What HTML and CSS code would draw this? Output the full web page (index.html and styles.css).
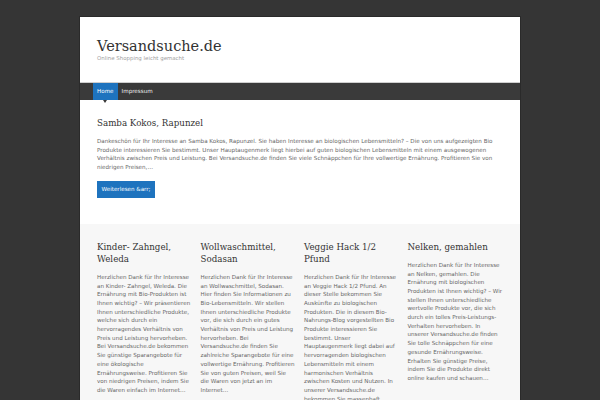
FILE: index.html
```html
<!DOCTYPE html>
<html lang="de">
<head>
<meta charset="utf-8">
<title>Versandsuche.de</title>
<link rel="stylesheet" href="styles.css">
</head>
<body>
<div class="site">
  <header class="masthead">
    <h1 class="site-title">Versandsuche.de</h1>
    <p class="tagline">Online Shopping leicht gemacht</p>
  </header>
  <nav class="mainnav">
    <a class="navitem current" href="#">Home</a>
    <a class="navitem" href="#">Impressum</a>
  </nav>
  <main class="featured">
    <h2 class="post-title">Samba Kokos, Rapunzel</h2>
    <p class="excerpt">Dankeschön für Ihr Interesse an Samba Kokos, Rapunzel. Sie haben Interesse an biologischen Lebensmitteln? – Die von uns aufgezeigten Bio Produkte interessieren Sie bestimmt. Unser Hauptaugenmerk liegt hierbei auf guten biologischen Lebensmitteln mit einem ausgewogenen Verhältnis zwischen Preis und Leistung. Bei Versandsuche.de finden Sie viele Schnäppchen für Ihre vollwertige Ernährung. Profitieren Sie von niedrigen Preisen,…</p>
    <a class="more" href="#">Weiterlesen &amp;arr;</a>
  </main>
  <section class="grid">
    <article class="card">
      <h3 class="card-title">Kinder- Zahngel, Weleda</h3>
      <p class="card-text">Herzlichen Dank für Ihr Interesse an Kinder- Zahngel, Weleda. Die Ernährung mit Bio-Produkten ist Ihnen wichtig? – Wir präsentieren Ihnen unterschiedliche Produkte, welche sich durch ein hervorragendes Verhältnis von Preis und Leistung hervorheben. Bei Versandsuche.de bekommen Sie günstige Sparangebote für eine ökologische Ernährungsweise. Profitieren Sie von niedrigen Preisen, indem Sie die Waren einfach im Internet…</p>
    </article>
    <article class="card">
      <h3 class="card-title">Wollwaschmittel, Sodasan</h3>
      <p class="card-text">Herzlichen Dank für Ihr Interesse an Wollwaschmittel, Sodasan. Hier finden Sie Informationen zu Bio-Lebensmitteln. Wir stellen Ihnen unterschiedliche Produkte vor, die sich durch ein gutes Verhältnis von Preis und Leistung hervorheben. Bei Versandsuche.de finden Sie zahlreiche Sparangebote für eine vollwertige Ernährung. Profitieren Sie von guten Preisen, weil Sie die Waren von jetzt an im Internet…</p>
    </article>
    <article class="card">
      <h3 class="card-title">Veggie Hack 1/2 Pfund</h3>
      <p class="card-text">Herzlichen Dank für Ihr Interesse an Veggie Hack 1/2 Pfund. An dieser Stelle bekommen Sie Auskünfte zu biologischen Produkten. Die in diesem Bio-Nahrungs-Blog vorgestellten Bio Produkte interessieren Sie bestimmt. Unser Hauptaugenmerk liegt dabei auf hervorragenden biologischen Lebensmitteln mit einem harmonischen Verhältnis zwischen Kosten und Nutzen. In unserer Versandsuche.de bekommen Sie massenhaft Schnäppchen…</p>
    </article>
    <article class="card">
      <h3 class="card-title">Nelken, gemahlen</h3>
      <p class="card-text">Herzlichen Dank für Ihr Interesse an Nelken, gemahlen. Die Ernährung mit biologischen Produkten ist Ihnen wichtig? – Wir stellen Ihnen unterschiedliche wertvolle Produkte vor, die sich durch ein tolles Preis-Leistungs-Verhalten hervorheben. In unserer Versandsuche.de finden Sie tolle Schnäppchen für eine gesunde Ernährungsweise. Erhalten Sie günstige Preise, indem Sie die Produkte direkt online kaufen und schauen…</p>
    </article>
  </section>
</div>
</body>
</html>
```
FILE: styles.css
```css
html, body {
  margin: 0;
  padding: 0;
  background: #353535;
  height: 100%;
  overflow: hidden;
}
body {
  font-family: "DejaVu Sans", "Open Sans", sans-serif;
  color: #666;
}
.site {
  width: 440px;
  margin: 17px 0 0 80px;
  background: #fff;
  box-shadow: 0 0 0 1px #2a2a2a;
  min-height: 400px;
}
.masthead {
  height: 66px;
  box-sizing: border-box;
  padding: 20px 17px 0;
  border-bottom: 1px solid #cfcfcf;
}
.site-title {
  margin: 0;
  font-family: "DejaVu Serif", serif;
  font-weight: normal;
  font-size: 14.5px;
  line-height: 18px;
  color: #333;
}
.tagline {
  margin: 0;
  font-size: 5.45px;
  line-height: 7px;
  color: #a0a0a0;
}
.mainnav {
  display: flex;
  height: 17px;
  padding-left: 13px;
  background: #3a3a3a;
}
.navitem {
  position: relative;
  display: block;
  padding: 0 4px;
  line-height: 17px;
  font-size: 5.6px;
  color: #eee;
  text-decoration: none;
}
.navitem.current {
  background: #1e73be;
  color: #fff;
}
.navitem.current::after {
  content: "";
  position: absolute;
  left: 50%;
  bottom: -3px;
  margin-left: -2px;
  border-left: 2px solid transparent;
  border-right: 2px solid transparent;
  border-top: 3px solid #3a3a3a;
}
.featured {
  padding: 17px 17px 26px;
  background: #fff;
}
.post-title {
  margin: 0 0 8px;
  font-family: "DejaVu Serif", serif;
  font-weight: normal;
  font-size: 8.7px;
  line-height: 12px;
  color: #333;
}
.excerpt {
  margin: 0 0 9px;
  font-size: 5.6px;
  line-height: 8.7px;
}
.more {
  display: block;
  width: fit-content;
  padding: 0 4.5px;
  height: 17px;
  line-height: 17px;
  background: #1e73be;
  color: #fff;
  font-size: 5.6px;
  text-decoration: none;
}
.grid {
  display: grid;
  grid-template-columns: repeat(4, 1fr);
  column-gap: 8px;
  padding: 17px 17px 20px;
  background: #f7f7f7;
}
.card-title {
  margin: 0 0 8px;
  font-family: "DejaVu Serif", serif;
  font-weight: normal;
  font-size: 8.7px;
  line-height: 12px;
  color: #333;
}
.card-text {
  margin: 0;
  font-size: 5.58px;
  line-height: 8.7px;
}
```
